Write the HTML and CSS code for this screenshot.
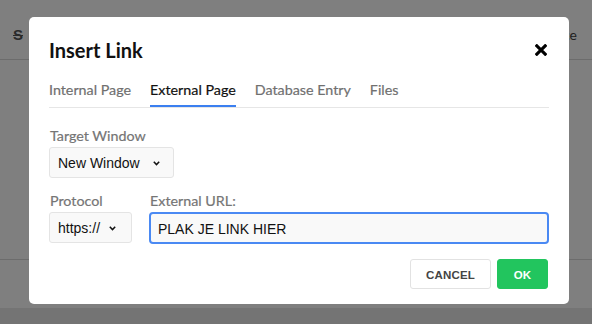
FILE: index.html
```html
<!DOCTYPE html>
<html>
<head>
<meta charset="utf-8">
<link rel="stylesheet" href="styles.css">
</head>
<body>
<div class="page">
  <div class="toolbar">
    <span class="tool-s">S</span>
    <span class="tool-source">Source</span>
  </div>
  <div class="editor"></div>
  <div class="statusbar"></div>
  <div class="footer"></div>
</div>
<div class="overlay"></div>
<div class="modal">
  <div class="modal-head">
    <h2 class="modal-title">Insert Link</h2>
    <span class="close">
      <svg width="12" height="12" viewBox="0 0 12 12"><path d="M1.8 1.8 L10.2 10.2 M10.2 1.8 L1.8 10.2" stroke="#000" stroke-width="3.1" stroke-linecap="square" fill="none"/></svg>
    </span>
  </div>
  <div class="tabs">
    <span class="tab">Internal Page</span>
    <span class="tab active">External Page</span>
    <span class="tab">Database Entry</span>
    <span class="tab">Files</span>
  </div>
  <div class="form">
    <div class="field">
      <label class="label">Target Window</label>
      <div class="select select-target">
        <span>New Window</span>
        <svg width="7" height="5" viewBox="0 0 7 5"><path d="M0.8 0.8 L3.5 3.6 L6.2 0.8" stroke="#111" stroke-width="1.5" fill="none"/></svg>
      </div>
    </div>
    <div class="row">
      <div class="field">
        <label class="label">Protocol</label>
        <div class="select select-proto">
          <span>https://</span>
          <svg width="7" height="5" viewBox="0 0 7 5"><path d="M0.8 0.8 L3.5 3.6 L6.2 0.8" stroke="#111" stroke-width="1.5" fill="none"/></svg>
        </div>
      </div>
      <div class="field grow">
        <label class="label">External URL:</label>
        <input class="url" type="text" value="PLAK JE LINK HIER">
      </div>
    </div>
  </div>
  <div class="actions">
    <button class="btn btn-cancel">CANCEL</button>
    <button class="btn btn-ok">OK</button>
  </div>
</div>
</body>
</html>
```
FILE: styles.css
```css
* { box-sizing: border-box; }
html, body { margin: 0; padding: 0; }
body {
  width: 592px;
  height: 324px;
  overflow: hidden;
  position: relative;
  background: #fff;
  font-family: Lato, "Liberation Sans", sans-serif;
}
.page {
  display: flex;
  flex-direction: column;
  height: 324px;
}
.toolbar {
  height: 60px;
  border-bottom: 1px solid #d9d9d9;
  display: flex;
  align-items: center;
  justify-content: space-between;
  padding: 10px 15px 0 13px;
}
.tool-s {
  font-family: "Liberation Sans", sans-serif;
  font-weight: bold;
  font-size: 15px;
  color: #555;
  text-decoration: line-through;
}
.tool-source {
  font-family: Lato, sans-serif;
  font-size: 14px;
  color: #444;
}
.editor {
  height: 200px;
  border-bottom: 1px solid #d9d9d9;
}
.statusbar { height: 48px; }
.footer { flex: 1; background: #e8e8e8; }
.overlay {
  position: absolute;
  inset: 0;
  background: rgba(0, 0, 0, 0.5);
}
.modal {
  position: absolute;
  left: 29px;
  top: 17px;
  width: 540px;
  background: #fff;
  border-radius: 5px;
  padding: 21px 20px 15px 20px;
}
.modal-head {
  display: flex;
  align-items: center;
  justify-content: space-between;
}
.modal-title {
  margin: 0;
  font-size: 20px;
  line-height: 24px;
  font-weight: bold;
  color: #111;
}
.close {
  display: flex;
  margin-right: 2px;
  margin-top: -1px;
}
.tabs {
  margin-top: 19px;
  display: flex;
  gap: 19px;
  border-bottom: 1px solid #e6e6e6;
}
.tab {
  font-size: 14.3px;
  line-height: 18px;
  color: #707070;
  padding-bottom: 6px;
  border-bottom: 2px solid transparent;
  -webkit-text-stroke: 0.2px currentColor;
}
.tab.active {
  color: #111;
  border-bottom-color: #3b7ff0;
}
.form { margin-top: 19px; }
.field { display: flex; flex-direction: column; align-items: flex-start; }
.field.grow { flex: 1; align-items: stretch; }
.label {
  font-size: 14.3px;
  line-height: 18px;
  color: #757575;
  margin-bottom: 2px;
  padding-left: 1px;
  -webkit-text-stroke: 0.2px currentColor;
}
.select {
  height: 31px;
  background: #f9f9f9;
  border: 1px solid #e4e4e4;
  border-radius: 3px;
  display: flex;
  align-items: center;
  justify-content: space-between;
  padding: 1px 13px 0 8px;
  font-family: "Liberation Sans", Arial, sans-serif;
  font-size: 14px;
  color: #111;
}
.select svg { margin-top: 1px; }
.select-target { width: 125px; }
.select-proto { width: 83px; padding-right: 15px; }
.row {
  margin-top: 14px;
  display: flex;
  gap: 17px;
}
.url {
  height: 32px;
  width: 100%;
  border: 2px solid #4a89f3;
  border-radius: 4px;
  background: #f9f9f9;
  padding: 1px 7px 0 7px;
  font-family: "Liberation Sans", Arial, sans-serif;
  font-size: 14px;
  color: #111;
  outline: none;
}
.actions {
  margin-top: 15px;
  display: flex;
  justify-content: flex-end;
  gap: 6px;
  padding-right: 1px;
}
.btn {
  height: 30px;
  border-radius: 3px;
  font-family: "Liberation Sans", Arial, sans-serif;
  font-weight: bold;
  font-size: 11.5px;
  letter-spacing: 0.2px;
  padding: 1px 0 0 0;
  cursor: pointer;
}
.btn-cancel {
  width: 81px;
  background: #fff;
  border: 1px solid #e2e2e2;
  color: #444;
}
.btn-ok {
  width: 51px;
  background: #22c55e;
  border: 1px solid #22c55e;
  color: #fff;
}
```
